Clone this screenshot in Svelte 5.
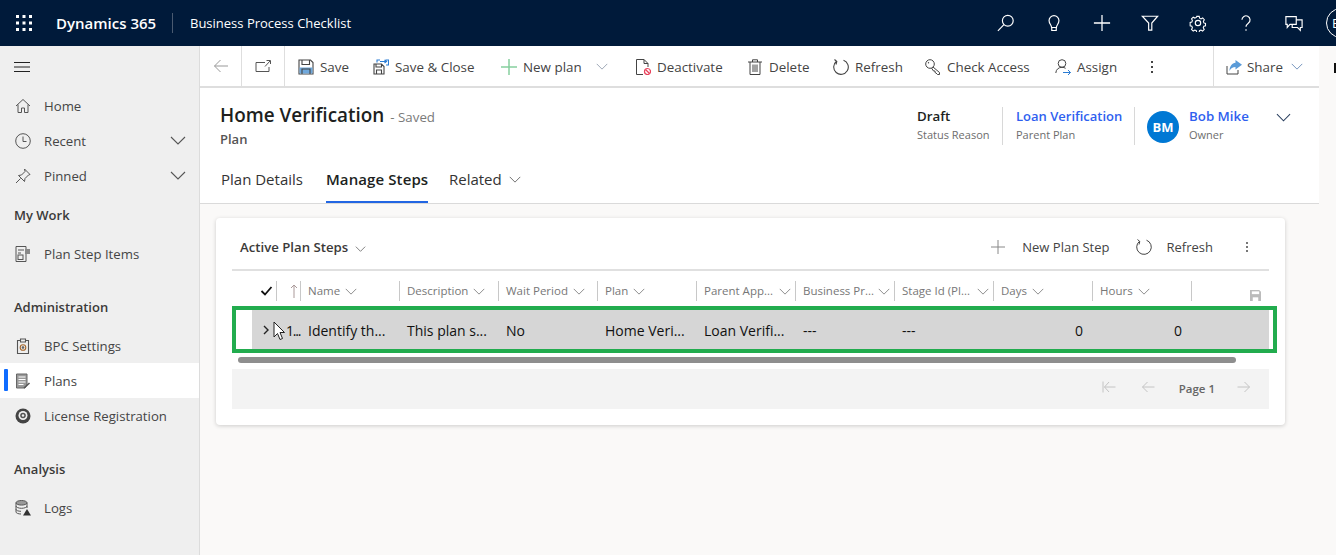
<script>
  const columns = [
    { name: 'Name', value: 'Identify th...' },
    { name: 'Description', value: 'This plan s...' },
    { name: 'Wait Period', value: 'No' },
    { name: 'Plan', value: 'Home Veri...' },
    { name: 'Parent App...', value: 'Loan Verifi...', far: true },
    { name: 'Business Pr...', value: '---', far: true },
    { name: 'Stage Id (Pl...', value: '---', far: true },
    { name: 'Days', value: '0', num: true },
    { name: 'Hours', value: '0', num: true }
  ];
</script>

{#snippet chev(cls)}
  <svg class={cls} viewBox="0 0 16 9" fill="none" stroke="currentColor" stroke-width="1.1"><path d="M1 1l7 7 7-7" /></svg>
{/snippet}

<div class="page">
  <header class="topbar">
    <svg class="waffle" viewBox="0 0 16 16" fill="#fff">
      <rect x="0" y="0" width="3" height="3" /><rect x="6.5" y="0" width="3" height="3" /><rect x="13" y="0" width="3" height="3" />
      <rect x="0" y="6.5" width="3" height="3" /><rect x="6.5" y="6.5" width="3" height="3" /><rect x="13" y="6.5" width="3" height="3" />
      <rect x="0" y="13" width="3" height="3" /><rect x="6.5" y="13" width="3" height="3" /><rect x="13" y="13" width="3" height="3" />
    </svg>
    <span class="brand">Dynamics 365</span>
    <span class="brand-sep"></span>
    <span class="app-name">Business Process Checklist</span>
    <div class="top-icons">
      <span class="ti"><svg viewBox="0 0 20 20" fill="none" stroke="#fff" stroke-width="1.3"><circle cx="12" cy="7.5" r="6" /><path d="M7.7 11.8L1 18.8" /></svg></span>
      <span class="ti"><svg viewBox="0 0 20 20" fill="none" stroke="#fff" stroke-width="1.3"><path d="M7.3 15c0-3-2.8-3.9-2.8-7.7a5.5 5.5 0 0 1 11 0c0 3.800-2.800 4.700-2.800 7.700zM7.500 15v3.300h5V15" /></svg></span>
      <span class="ti"><svg viewBox="0 0 20 20" fill="none" stroke="#fff" stroke-width="1.4"><path d="M10 1v18M1 10h18" /></svg></span>
      <span class="ti"><svg viewBox="0 0 20 20" fill="none" stroke="#fff" stroke-width="1.3"><path d="M1.500 2.500h17L12 10v8H8.500v-8z" /></svg></span>
      <span class="ti"><svg viewBox="0 0 20 20" fill="none" stroke="#fff" stroke-width="1.300"><circle cx="10" cy="10" r="3" /><path d="M8.500 1.800h3l.5 2.300 1.700.8 2.100-1.100 2 2.200-1.200 2 .6 1.900 2.100.6v2.900l-2.100.6-.7 1.800 1.200 2.100-2 2-2.100-1.100-1.700.7-.6 2.200h-2.900l-.5-2.200-1.800-.7-2 1.100-2.100-2 1.100-2.100-.7-1.800-2.100-.6V9.400l2.100-.6.700-1.800-1.100-2.100 2.100-2.100 2 1.100 1.800-.8z" transform="translate(1 1) scale(.9)" /></svg></span>
      <span class="ti"><svg viewBox="0 0 20 20" fill="none" stroke="#fff" stroke-width="1.300"><path d="M5.500 6.500a4.500 4.500 0 1 1 7.200 3.600c-1.700 1.300-2.700 2-2.700 4.200" /><circle cx="10" cy="17.800" r=".9" fill="#fff" stroke="none" /></svg></span>
      <span class="ti"><svg viewBox="0 0 20 20" fill="none" stroke="#fff" stroke-width="1.300"><path d="M1 3h11.500v8.500H5.500L2.500 15v-3.500H1z" /><path d="M12.500 6.500H19V15h-2v3.200L14 15H8v-3.500" /></svg></span>
    </div>
    <span class="me">B</span>
  </header>

  <div class="body">
    <nav class="side">
      <div class="burger"><svg viewBox="0 0 16 10" fill="none" stroke="#222" stroke-width="1"><path d="M0 .5h16M0 5h16M0 9.500h16" /></svg></div>
      <div class="nav-item">
        <svg class="ni" viewBox="0 0 16 16" fill="none" stroke="#555" stroke-width="1"><path d="M1 8l7-6.500L15 8M3 6.500V14.500h3.500V10h3v4.500H13V6.500" /></svg>
        <span>Home</span>
      </div>
      <div class="nav-item">
        <svg class="ni" viewBox="0 0 16 16" fill="none" stroke="#555" stroke-width="1"><circle cx="8" cy="8" r="7.300" /><path d="M8 3.500V8.500h3.500" /></svg>
        <span>Recent</span>
        {@render chev('nav-chev')}
      </div>
      <div class="nav-item">
        <svg class="ni" viewBox="0 0 16 16" fill="none" stroke="#555" stroke-width="1"><path d="M9.500 1L15 6.500l-1.500.5-3.500 3.500-.5 3-6-6 3-.5L10 3.500zM5.500 10.500L1 15" /></svg>
        <span>Pinned</span>
        {@render chev('nav-chev')}
      </div>

      <div class="group first">My Work</div>
      <div class="nav-item">
        <svg class="ni" viewBox="0 0 16 16" fill="none" stroke="#555" stroke-width="1"><path d="M1 .5h10v15H1zM3 4h6M3 7h3" /><rect x="3" y="9" width="5" height="4.500" /><rect x="10" y="3" width="5" height="5" fill="#888" stroke="none" /></svg>
        <span>Plan Step Items</span>
      </div>

      <div class="group">Administration</div>
      <div class="nav-item">
        <svg class="ni" viewBox="0 0 16 16" fill="none" stroke="#555" stroke-width="1.100"><path d="M5 2.500H2.500v13h11v-13H11M5.500 1h5v3h-5z" /><circle cx="8" cy="9.500" r="2.800" stroke="#a5662a" /><circle cx="8" cy="9.500" r=".8" /></svg>
        <span>BPC Settings</span>
      </div>
      <div class="nav-item active">
        <i class="marker"></i>
        <svg class="ni" viewBox="0 0 16 16" fill="none" stroke="#666" stroke-width="1"><path d="M1.500 1h10.500v11l-2 3H1.500z" fill="#999" /><path d="M3.500 4h7M3.500 6.500h7M3.500 9h7M3.500 11.500h5" stroke="#fff" /><path d="M9 15l5.500-5" stroke="#555" stroke-width="1.600" /></svg>
        <span>Plans</span>
      </div>
      <div class="nav-item">
        <svg class="ni" viewBox="0 0 16 16" fill="none"><circle cx="8" cy="8" r="7.500" fill="#444" /><circle cx="8" cy="7.500" r="4.500" fill="#eee" /><circle cx="8" cy="7.500" r="2.800" fill="#555" /><circle cx="8" cy="7.500" r="1.200" fill="#eee" /></svg>
        <span>License Registration</span>
      </div>

      <div class="group">Analysis</div>
      <div class="nav-item">
        <svg class="ni" viewBox="0 0 16 16" fill="none" stroke="#555" stroke-width="1"><ellipse cx="6.500" cy="2.800" rx="5.500" ry="2.300" fill="#999" /><path d="M1 2.800V12c0 1.200 2.500 2 5 2M12 2.800V8M1 6c0 1.200 2.500 2.300 5.500 2.300S12 7.200 12 6M1 9.300c0 1.200 2.500 2 5 2" /><path d="M12 9l4 6.500H8z" fill="#333" stroke="none" /></svg>
        <span>Logs</span>
      </div>
    </nav>

    <main class="main">
      <div class="cmdbar">
        <span class="cmd-tile"><svg class="ic" viewBox="0 0 16 16" fill="none" stroke="#999" stroke-width="1"><path d="M15 8H1.500M7.500 2L1.500 8l6 6" /></svg></span>
        <span class="cmd-tile"><svg class="ic" viewBox="0 0 16 16" fill="none" stroke="#555" stroke-width="1"><path d="M10 4.500H1v9h13V9M10 8.500L15 3M11.500 2.500H15.500V6" /></svg></span>
        <span class="cmd"><svg class="ic" viewBox="0 0 16 16" fill="none" stroke="#444" stroke-width="1.100"><path d="M1 1h11.500L15 3.500V15H1z" /><rect x="1.500" y="8.500" width="13" height="6" fill="#6fa8dc" stroke="none" /><path d="M4 1v4.500h7.500V1M4 15v-5h8v5" /></svg>Save</span>
        <span class="cmd"><svg class="ic" viewBox="0 0 16 16" fill="none" stroke="#444" stroke-width="1.100"><path d="M1 5h7.500L11 7.500V15H1zM3 5v3h5.500V5M3.500 15v-4h5v4" /><path d="M4 3.500V1h3M12.500 1H15.500V6H13M7 2.500h6M11.500 1L13.500 2.500 11.500 4" stroke="#2b7cd3" /></svg>Save &amp; Close</span>
        <span class="cmd"><svg class="ic" viewBox="0 0 16 16" fill="none" stroke="#86cf9f" stroke-width="1.500"><path d="M8 0v16M0 8h16" /></svg>New plan{@render chev('cmd-chev')}</span>
        <span class="cmd"><svg class="ic" viewBox="0 0 16 16" fill="none" stroke="#444" stroke-width="1"><path d="M8 15.500H1.500V.5H9L13 4.500V8M9 .5v4h4" /><circle cx="12.500" cy="12.500" r="3" stroke="#e8405a" stroke-width="1.200" /><path d="M10.500 10.500l4 4" stroke="#e8405a" stroke-width="1.200" /></svg>Deactivate</span>
        <span class="cmd"><svg class="ic" viewBox="0 0 16 16" fill="none" stroke="#444" stroke-width="1"><path d="M1 3h14M3 3v12.500h10V3M5.500 3V.8h5V3M6 5.500v7.500M8 5.500v7.500M10 5.500v7.500" /></svg>Delete</span>
        <span class="cmd"><svg class="ic" viewBox="0 0 16 16" fill="none" stroke="#444" stroke-width="1.100"><path d="M10.500 1.200A7.300 7.300 0 1 1 3.500 2.300M1.500 .5L3.800 2.500 3 5.500" /></svg>Refresh</span>
        <span class="cmd"><svg class="ic" viewBox="0 0 16 16" fill="none" stroke="#444" stroke-width="1"><circle cx="5" cy="5" r="4.300" /><path d="M8 8l6.500 5.500V15.500h-2L11 14l-1-.5V12H8.500L6.500 9" /><circle cx="3.500" cy="3.800" r=".7" fill="#444" stroke="none" /></svg>Check Access</span>
        <span class="cmd"><svg class="ic" viewBox="0 0 16 16" fill="none" stroke="#444" stroke-width="1"><circle cx="7" cy="4.500" r="3.800" /><path d="M.8 14c.2-3.700 3-5.700 6.200-5.700 1.400 0 2.600.4 3.600 1" /><path d="M8 13.500h7.500M13 11l2.500 2.500L13 16" stroke="#2b7cd3" /></svg>Assign</span>
        <span class="cmd dots"><i></i><i></i><i></i></span>
        <span class="cmd share"><svg class="ic" viewBox="0 0 16 16" fill="none"><path d="M1 7v8h11V11" stroke="#444" stroke-width="1" /><path d="M9.500 1L16 5.800 9.500 10.500V8C7 8 4.500 9.500 3.500 12 3.500 7.500 6 4 9.500 3.800z" fill="#5a9bd8" /></svg>Share{@render chev('share-chev')}</span>
      </div>

      <section class="form-head">
        <div class="head-row">
          <div class="head-left">
            <div class="title-line"><span class="title">Home Verification</span><span class="saved">- Saved</span></div>
            <div class="entity">Plan</div>
          </div>
          <div class="head-right">
            <div class="hf draft"><b>Draft</b><small>Status Reason</small></div>
            <div class="hf parent"><b class="link">Loan Verification</b><small>Parent Plan</small></div>
            <div class="owner">
              <span class="avatar">BM</span>
              <div class="hf"><b class="link">Bob Mike</b><small>Owner</small></div>
            </div>
            {@render chev('head-chev')}
          </div>
        </div>
        <div class="tabs">
          <span class="tab">Plan Details</span>
          <span class="tab on">Manage Steps</span>
          <span class="tab">Related{@render chev('tab-chev')}</span>
        </div>
      </section>

      <section class="card">
        <div class="card-head">
          <span class="view">Active Plan Steps{@render chev('view-chev')}</span>
          <div class="sub-cmds">
            <span class="sc"><svg class="sic" viewBox="0 0 16 16" fill="none" stroke="#888" stroke-width="1"><path d="M8 1v14M1 8h14" /></svg>New Plan Step</span>
            <span class="sc"><svg class="sic" viewBox="0 0 16 16" fill="none" stroke="#444" stroke-width="1"><path d="M10.500 1.200A7.300 7.300 0 1 1 3.500 2.300M1.500 .5L3.800 2.500 3 5.500" /></svg>Refresh</span>
            <span class="dots small"><i></i><i></i><i></i></span>
          </div>
        </div>

        <div class="grid-head">
          <span class="gh-check"><svg viewBox="0 0 12 10" fill="none" stroke="#111" stroke-width="1.800"><path d="M1 5l3.500 3.500L11 1" /></svg></span>
          <span class="gh-sort"><svg viewBox="0 0 8 14" fill="none" stroke="#a99" stroke-width="1"><path d="M4 14V1M1 4l3-3 3 3" /></svg></span>
          {#each columns as c}
            <span class="gh" class:far={c.far}>{c.name}{@render chev('gh-chev')}</span>
          {/each}
          <span class="gh-save"><svg viewBox="0 0 12 12" fill="#bbb"><path d="M0 0h10l2 2v10H0z" /><rect x="2" y="1.500" width="8" height="3" fill="#fff" /><rect x="3" y="8" width="6" height="4" fill="#fff" /></svg></span>
        </div>

        <div class="row">
          <span class="row-gap"></span>
          <span class="row-exp"><svg viewBox="0 0 6 10" fill="none" stroke="#222" stroke-width="1.400"><path d="M1 1l4 4-4 4" /></svg></span>
          <span class="row-num">1...</span>
          {#each columns as c}
            <span class="cell" class:num={c.num}>{c.value}</span>
          {/each}
          <div class="highlight"></div>
          <svg class="pointer" viewBox="0 0 12 20"><path d="M1 1v15l3.500-3.500 2.500 6 2.500-1-2.500-6h4.500z" fill="#fff" stroke="#222" stroke-width="1" /></svg>
        </div>

        <div class="scroll-track"><div class="scroll-thumb"></div></div>

        <div class="pager">
          <svg class="pg first-pg" viewBox="0 0 14 12" fill="none" stroke="#c4c4c4" stroke-width="1"><path d="M1 .5v11M13.500 6H2.500M7 1L2.500 6 7 11" /></svg>
          <svg class="pg prev-pg" viewBox="0 0 14 12" fill="none" stroke="#c4c4c4" stroke-width="1"><path d="M13.500 6H1.500M6.500 1L1.500 6l5 5" /></svg>
          <span class="page-no">Page 1</span>
          <svg class="pg next-pg" viewBox="0 0 14 12" fill="none" stroke="#c4c4c4" stroke-width="1"><path d="M.5 6h12M7.500 1l5 5-5 5" /></svg>
        </div>
      </section>
    </main>

    <aside class="edge"><i></i></aside>
  </div>
</div>

<style>
  :global(body) { margin: 0; background: #faf9f8; }
  .page {
    width: 1336px; height: 555px; overflow: hidden; display: flex; flex-direction: column;
    font-family: "Open Sans", "Noto Sans", sans-serif; color: #323130; font-size: 13px;
  }
  .topbar {
    height: 46px; flex: none; background: #001a3a; color: #fff; display: flex; align-items: center; position: relative;
  }
  .waffle { width: 16px; height: 16px; margin-left: 16px; }
  .brand { margin-left: 24px; font-size: 15px; font-weight: 600; width: 101px; white-space: nowrap; }
  .brand-sep { width: 1px; height: 20px; background: #4a5a70; margin-left: 15px; }
  .app-name { margin-left: 17px; font-size: 13px; white-space: nowrap; }
  .top-icons { margin-left: auto; display: flex; margin-right: 8px; }
  .ti { width: 48px; display: flex; justify-content: center; }
  .ti svg { width: 18px; height: 18px; }
  .me {
    flex: none; width: 30px; height: 30px; margin-right: -20px; border: 1px solid #fff; border-radius: 50%;
    display: flex; align-items: center; padding-left: 5px; font-size: 13px; box-sizing: border-box;
  }
  .body { flex: 1; display: flex; min-height: 0; }
  .side { width: 199px; flex: none; background: #efefef; border-right: 1px solid #dcdcdc; }
  .burger { height: 42px; display: flex; align-items: center; padding-left: 14px; }
  .burger svg { width: 16px; height: 10px; }
  .nav-item { height: 35px; display: flex; align-items: center; position: relative; padding-left: 15px; color: #454545; }
  .nav-item span { margin-left: 13px; font-size: 13.2px; white-space: nowrap; }
  .ni { width: 16px; height: 16px; flex: none; }
  .active { background: #fff; }
  .marker { position: absolute; left: 4px; top: 6px; width: 4px; height: 22px; background: #0f6cff; border-radius: 1px; }
  :global(.nav-chev) { width: 16px; height: 9px; position: absolute; left: 170px; color: #555; }
  .group {
    height: 39px; padding-bottom: 4px; box-sizing: border-box; display: flex; align-items: center; padding-left: 14px;
    font-weight: 600; font-size: 13px; margin-top: 18px; color: #3b3a39;
  }
  .group.first { margin-top: 4px; }
  .main { width: 1119px; flex: none; display: flex; flex-direction: column; }
  .cmdbar {
    height: 42px; box-sizing: border-box; flex: none; background: #fff; border-bottom: 2px solid #dedede; display: grid; align-items: center;
    grid-template-columns: 42px 43px 75px 128px 134px 112px 86px 92px 130px 88px 83px 1fr;
  }
  .cmd-tile { height: 100%; display: flex; align-items: center; justify-content: center; border-right: 1.500px solid #dedede; box-sizing: border-box; }
  .cmd { display: flex; align-items: center; gap: 6px; white-space: nowrap; font-size: 13.4px; color: #444; height: 100%; padding: 1px 0 0 13px; position: relative; box-sizing: border-box; }
  .ic { width: 16px; height: 16px; flex: none; }
  :global(.cmd-chev) { width: 12px; height: 7px; position: absolute; left: 108px; color: #8a96a8; }
  .dots { flex-direction: column; gap: 3px; justify-content: center; align-items: flex-start; padding-left: 21px; }
  .dots i { width: 2px; height: 2px; background: #444; display: block; }
  .share { border-left: 1.500px solid #dedede; gap: 5px; padding-left: 12px; }
  :global(.share-chev) { width: 12px; height: 7px; position: absolute; left: 77px; color: #5a7fb0; }
  .form-head { height: 116px; flex: none; background: #fff; border-bottom: 1px solid #dadada; box-sizing: border-box; display: flex; flex-direction: column; }
  .head-row { height: 72px; flex: none; display: flex; justify-content: space-between; padding-left: 20px; }
  .head-left { padding-top: 14px; }
  .title-line { display: flex; align-items: baseline; }
  .title { font-size: 18.9px; font-weight: 600; color: #201f1e; white-space: nowrap; line-height: 26px; }
  .saved { font-size: 13.3px; color: #7a7a7a; margin-left: 6px; }
  .entity { font-size: 13px; font-weight: 600; color: #555; line-height: 18px; margin-top: 2px; }
  .head-right { display: flex; padding-top: 19px; position: relative; width: 402px; box-sizing: border-box; }
  .hf { display: flex; flex-direction: column; }
  .hf b { font-size: 13.3px; font-weight: 600; line-height: 18px; color: #201f1e; white-space: nowrap; }
  .hf b.link { color: #2f5fef; }
  .hf small { font-size: 11px; line-height: 20px; color: #6d6d6d; white-space: nowrap; }
  .draft { width: 85px; height: 38px; border-right: 1px solid #d8d8d8; flex: none; }
  .parent { width: 118px; height: 38px; padding-left: 13px; border-right: 1px solid #d8d8d8; margin-right: 12px; flex: none; }
  .parent b.link { font-size: 13px; }
  .owner { display: flex; gap: 10px; }
  .avatar { width: 32px; height: 32px; border-radius: 50%; background: #0078d4; color: #fff; font-size: 13px; font-weight: 700; display: flex; align-items: center; justify-content: center; margin-top: 4px; }
  :global(.head-chev) { width: 15px; height: 9px; position: absolute; left: 359px; top: 25px; color: #2a3f5f; }
  .tabs { display: flex; gap: 23px; padding-left: 21px; height: 43px; flex: none; }
  .tab { font-size: 15px; line-height: 20px; color: #333; padding-top: 9px; box-sizing: border-box; height: 43px; white-space: nowrap; display: block; }
  .tab.on { font-weight: 600; color: #201f1e; border-bottom: 2px solid #2266e3; width: 102px; margin-right: -2px; letter-spacing: .1px; }
  :global(.tab-chev) { width: 12px; height: 7px; margin-left: 7px; color: #555; vertical-align: 2px; }
  .card {
    margin: 14px 0 0 16px; width: 1069px; height: 207px; box-sizing: border-box; background: #fff; border-radius: 4px;
    box-shadow: 0 1px 4px rgba(0, 0, 0, .18); padding: 0 16px; flex: none;
  }
  .card-head { height: 53px; padding-top: 6px; border-bottom: 2px solid #e0e0e0; box-sizing: border-box; display: flex; align-items: center; justify-content: space-between; padding-left: 8px; }
  .view { font-size: 13.2px; font-weight: 600; color: #3b3a39; white-space: nowrap; }
  :global(.view-chev) { width: 11px; height: 6px; margin-left: 7px; color: #555; vertical-align: 0; }
  .sub-cmds { display: flex; align-items: center; font-size: 13px; color: #444; }
  .sc { display: flex; align-items: center; gap: 16px; white-space: nowrap; }
  .sc + .sc { margin-left: 26px; gap: 15px; }
  .sic { width: 16px; height: 16px; }
  .dots.small { display: flex; margin-left: 24px; padding: 0 21px 0 9px; gap: 2px; }
  .dots.small i { background: #777; }
  .grid-head {
    height: 35px; padding-top: 5px; box-sizing: border-box; display: grid; grid-template-columns: 45px 24px repeat(9, 99px) 1fr; align-items: center;
  }
  .gh-check { display: flex; justify-content: flex-end; padding-right: 3px; height: 20px; align-items: center; border-right: 1px solid #c8c8c8; }
  .gh-check svg { width: 13px; height: 10px; }
  .gh-sort { display: flex; justify-content: flex-end; padding-right: 2px; height: 20px; align-items: center; border-right: 1px solid #c8c8c8; }
  .gh-sort svg { width: 8px; height: 14px; }
  .gh { height: 20px; line-height: 20px; padding-left: 7px; border-right: 1px solid #c8c8c8; font-size: 11.5px; color: #777; white-space: nowrap; position: relative; overflow: hidden; }
  :global(.gh-chev) { width: 12px; height: 7px; margin-left: 5px; color: #777; vertical-align: 0; }
  .gh.far :global(.gh-chev) { position: absolute; right: 4px; top: 7px; margin: 0; }
  .gh-save { display: flex; justify-content: flex-end; padding-right: 8px; padding-top: 9px; }
  .gh-save svg { width: 11px; height: 11px; }
  .row {
    height: 39px; margin-top: 4px; position: relative; display: grid; grid-template-columns: 20px 27px 22px repeat(9, 99px) 1fr; align-items: center; background: #d6d6d6;
  }
  .row-gap { background: #fff; height: 100%; }
  .row-exp { display: flex; justify-content: center; }
  .row-exp svg { width: 6px; height: 10px; }
  .row-num { padding: 1px 0 0 7px; font-size: 14px; color: #111; white-space: nowrap; letter-spacing: -1.2px; }
  .cell { padding: 1px 0 0 7px; font-size: 14px; color: #111; white-space: nowrap; overflow: hidden; }
  .cell.num { text-align: right; padding-right: 10px; padding-left: 0; }
  .highlight { position: absolute; left: 0; right: -8px; top: -4px; bottom: -4px; border: 4px solid #22ac4e; pointer-events: none; }
  .pointer { position: absolute; left: 41px; top: 11px; width: 12px; height: 20px; }
  .scroll-track { height: 6px; margin-top: 8px; padding-left: 6px; }
  .scroll-thumb { width: 998px; height: 6px; background: #8e8e8e; border-radius: 3px; }
  .pager { height: 40px; margin-top: 6px; background: #f3f3f3; display: flex; align-items: center; justify-content: flex-end; padding-right: 18px; }
  .pg { width: 14px; height: 12px; margin-bottom: 5px; }
  .prev-pg { margin-left: 25px; }
  .next-pg { margin-left: 22px; }
  .page-no { font-size: 11.5px; font-weight: 600; color: #666; margin: 0 0 2px 24px; }
  .edge { flex: 1; position: relative; }
  .edge i { position: absolute; right: 0; top: 17px; width: 2px; height: 10px; background: #111; }
</style>
